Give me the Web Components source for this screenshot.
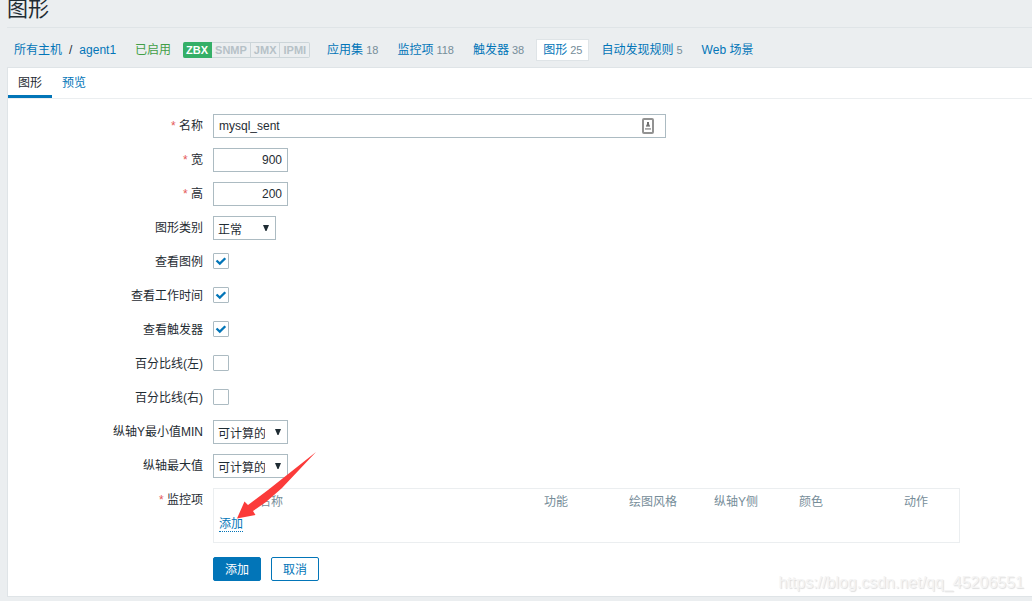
<!DOCTYPE html>
<html lang="zh-CN">
<head>
<meta charset="utf-8">
<title>图形</title>
<style>
  html, body { margin: 0; background: #ebeef0; overflow-x: hidden; }
  body { font: 12px/14px "Liberation Sans", "Noto Sans CJK SC", sans-serif; color: #1f2c33; }
</style>
</head>
<body>
<graph-page></graph-page>
<script>
const define = (name, html, setup) => {
  const template = document.createElement('template');
  template.innerHTML = html;
  customElements.define(name, class extends HTMLElement {
    constructor() {
      super();
      this.attachShadow({ mode: 'open' }).append(template.content.cloneNode(true));
    }
    connectedCallback() { if (setup) setup(this, this.shadowRoot); }
  });
};

define('page-title', `
<style>
  :host { display: block; border-bottom: 1px solid #dfe4e7; padding-bottom: 9px; }
  h1 { margin: 0; font-size: 21px; line-height: 18px; font-weight: 400; }
</style>
<h1><slot></slot></h1>`);

define('nav-link', `
<style>
  :host { display: block; border: 1px solid transparent; padding: 3px 6px; white-space: nowrap; }
  :host([selected]) { background: #fff; border-color: #dfe4e7; }
  a { color: #0275b8; text-decoration: none; }
  sup { font-size: 11px; line-height: 14px; vertical-align: baseline; color: #768d99; margin-left: 3px; }
  sup:empty { display: none; }
</style>
<a href="#"><slot></slot></a><sup></sup>`, (el, root) => {
  root.querySelector('sup').textContent = el.getAttribute('count') || '';
});

define('status-badges', `
<style>
  :host { display: flex; margin-right: 5px; font-size: 11px; font-weight: 700; line-height: 14px; color: #b6c1c7; }
  span { border: 1px solid #ccd5d9; border-left-width: 0; padding: 0 3px; }
  span:first-of-type { background: #34af67; border-color: #34af67; color: #fff; border-radius: 2px 0 0 2px; }
  span:last-of-type { border-radius: 0 2px 2px 0; }
</style>
<span>ZBX</span><span>SNMP</span><span>JMX</span><span>IPMI</span>`);

define('host-nav', `
<style>
  :host { display: flex; align-items: center; gap: 5px; padding: 11px 0 6px; }
  .slash { margin: 0 -5px; }
  .enabled { color: #429e47; padding: 0 7px; }
</style>
<nav-link>所有主机</nav-link><span class="slash">/</span><nav-link>agent1</nav-link>
<span class="enabled">已启用</span>
<status-badges></status-badges>
<nav-link count="18">应用集</nav-link>
<nav-link count="118">监控项</nav-link>
<nav-link count="38">触发器</nav-link>
<nav-link count="25" selected>图形</nav-link>
<nav-link count="5">自动发现规则</nav-link>
<nav-link>Web 场景</nav-link>`);

define('tab-bar', `
<style>
  :host { display: flex; border-bottom: 1px solid #ebeef0; }
  a { padding: 8px 10px 5px; border-bottom: 3px solid transparent; color: #0275b8; text-decoration: none; }
  a[aria-current] { color: #1f2c33; border-color: #0275b8; }
</style>
<a href="#graph" aria-current="page">图形</a><a href="#preview">预览</a>`);

const row = `
  :host { display: grid; grid-template-columns: 195px 1fr; column-gap: 10px; align-items: start; }
  label { text-align: right; line-height: 24px; }
  .req::before { content: "* "; color: #e45959; }`;
const markRequired = (el, root) => {
  const label = root.querySelector('label');
  label.textContent = el.getAttribute('label');
  label.classList.toggle('req', el.hasAttribute('required'));
};

define('text-field', `
<style>${row}
  .box { position: relative; width: 453px; max-width: 100%; }
  :host([numeric]) .box { width: 75px; }
  :host([numeric]) svg { display: none; }
  :host([numeric]) input { text-align: right; }
  input { display: block; box-sizing: border-box; width: 100%; height: 24px; margin: 0; padding: 0 5px;
    border: 1px solid #acbbc2; background: #fff; font: inherit; color: inherit; }
  svg { position: absolute; right: 12px; top: 4px; }
</style>
<label for="f"></label>
<div class="box"><input id="f" type="text">
<svg width="12" height="16" viewBox="0 0 12 16"><rect x="1" y="1" width="10" height="14" rx="1" fill="#fff" stroke="#929292" stroke-width="2"/><path d="M5 4h2v2l1 2H4l1-2z" fill="#707070"/><path d="M4 8.500h4M3 10.500h6" stroke="#aaa"/><path d="M3 11.500h6" stroke="#bbb"/></svg></div>`,
(el, root) => { markRequired(el, root); root.querySelector('input').value = el.getAttribute('value'); });

define('select-field', `
<style>${row}
  .box { position: relative; justify-self: start; }
  select { appearance: none; display: block; box-sizing: border-box; height: 24px; margin: 0; padding: 3px 22px 0 4px;
    border: 1px solid #acbbc2; border-radius: 0; background: #fff; font: inherit; color: inherit; width: 75px; }
  :host([short]) select { width: 63px; }
  svg { position: absolute; right: 7px; top: 9px; pointer-events: none; }
</style>
<label for="f"></label>
<div class="box"><select id="f"><option></option></select>
<svg width="6" height="6" viewBox="0 0 6 6"><path d="M0 0h6L3.500 6h-1z" fill="#1f2c33"/></svg></div>`,
(el, root) => { markRequired(el, root); root.querySelector('option').textContent = el.getAttribute('value'); });

define('check-field', `
<style>${row}
  .box { position: relative; width: 16px; height: 16px; margin-top: 3px; }
  input { appearance: none; display: block; box-sizing: border-box; width: 16px; height: 16px; margin: 0;
    border: 1px solid #acbbc2; border-radius: 1px; background: #fff; }
  svg { position: absolute; left: 0; top: 0; pointer-events: none; display: none; }
  input:checked + svg { display: block; }
</style>
<label for="f"></label>
<div class="box"><input id="f" type="checkbox">
<svg width="16" height="16" viewBox="0 0 16 16"><path d="M3.500 7.500L6.800 10.600L12.300 5.200" fill="none" stroke="#0275b8" stroke-width="2.300"/></svg></div>`,
(el, root) => { markRequired(el, root); root.querySelector('input').checked = el.hasAttribute('checked'); });

define('items-field', `
<style>${row}
  .box { position: relative; box-sizing: border-box; width: 747px; max-width: 100%; border: 1px solid #ebeef0; padding: 0 5px 7px; }
  table { width: 100%; border-collapse: collapse; table-layout: fixed; }
  th { padding: 0; text-align: left; font-weight: 400; line-height: 26px; color: #768d99; white-space: nowrap; }
  td { padding: 2px 0 3px; line-height: 14px; }
  button { display: block; padding: 0; border: 0; border-bottom: 1px dotted #0275b8; background: none; font: inherit; color: #0275b8; }
  svg { position: absolute; left: 23px; top: -38px; pointer-events: none; }
</style>
<label class="req" id="l">监控项</label>
<div class="box">
<table aria-labelledby="l">
<colgroup><col style="width:40px"><col><col style="width:85px"><col style="width:85px"><col style="width:85px"><col style="width:105px"><col style="width:50px"></colgroup>
<thead><tr><th></th><th>名称</th><th>功能</th><th>绘图风格</th><th>纵轴Y侧</th><th>颜色</th><th>动作</th></tr></thead>
<tbody><tr><td colspan="7"><button type="button">添加</button></td></tr></tbody>
</table>
<svg width="80" height="70" viewBox="0 0 80 70"><path d="M79 1L45 37L29 51L16 60L18.500 64L0 67.500L7.500 50.500L11 54L31 39Z" fill="#fb3b3a"/></svg>
</div>`);

define('form-actions', `
<style>
  :host { display: flex; gap: 10px; padding: 4px 0 0 205px; }
  button { width: 48px; height: 24px; padding: 2px 0 0; border: 1px solid #0275b8; border-radius: 2px; background: #fff; color: #0275b8; font: inherit; }
  .main { background: #0275b8; color: #fff; }
</style>
<button class="main" type="submit">添加</button><button type="button">取消</button>`);

define('graph-form', `
<style>form { display: flex; flex-direction: column; gap: 10px; padding: 15px 0; }</style>
<form>
<text-field label="名称" value="mysql_sent" required></text-field>
<text-field label="宽" value="900" numeric required></text-field>
<text-field label="高" value="200" numeric required></text-field>
<select-field label="图形类别" value="正常" short></select-field>
<check-field label="查看图例" checked></check-field>
<check-field label="查看工作时间" checked></check-field>
<check-field label="查看触发器" checked></check-field>
<check-field label="百分比线(左)"></check-field>
<check-field label="百分比线(右)"></check-field>
<select-field label="纵轴Y最小值MIN" value="可计算的"></select-field>
<select-field label="纵轴最大值" value="可计算的"></select-field>
<items-field></items-field>
<form-actions></form-actions>
</form>`);

define('graph-page', `
<style>
  :host { display: block; padding-left: 7px; position: relative; overflow: hidden; }
  main { border: 1px solid #dfe4e7; border-right: 0; background: #fff; margin-bottom: 4px; }
  .mark { position: absolute; right: 8px; bottom: 8px; font-size: 16px; line-height: 20px; color: #f4f4f4; text-shadow: 1px 1px 1px #ddd; }
  graph-form { display: block; }
</style>
<page-title>图形</page-title>
<host-nav></host-nav>
<main><tab-bar></tab-bar><graph-form></graph-form></main>
<div class="mark">https://blog.csdn.net/qq_45206551</div>`);
</script>
</body>
</html>
